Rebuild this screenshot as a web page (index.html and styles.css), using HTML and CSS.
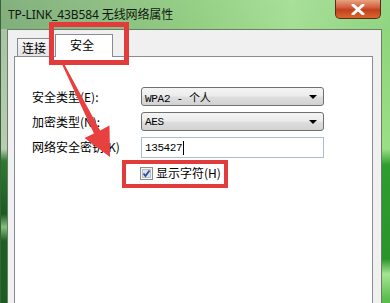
FILE: index.html
```html
<!DOCTYPE html>
<html lang="zh-CN">
<head>
<meta charset="utf-8">
<title>TP-LINK_43B584 无线网络属性</title>
<link rel="stylesheet" href="styles.css">
</head>
<body>
<div class="window">
  <div class="titlebar">
    <span class="title">TP-LINK_43B584 无线网络属性</span>
    <div class="close">
      <svg width="14" height="11" viewBox="0 0 14 11"><path d="M2 1 L12 10 M12 1 L2 10" stroke="#fff" stroke-width="3" stroke-linecap="round"/></svg>
    </div>
  </div>
  <div class="client">
    <div class="tabs">
      <div class="tab">连接</div>
      <div class="tab active">安全</div>
    </div>
    <div class="panel">
      <div class="form">
        <label class="lbl">安全类型(E):</label>
        <div class="select"><span>WPA2 - 个人</span><i class="caret"></i></div>
        <label class="lbl">加密类型(N):</label>
        <div class="select"><span>AES</span><i class="caret"></i></div>
        <label class="lbl">网络安全密钥(K)</label>
        <div class="input">135427<span class="cursor"></span></div>
      </div>
      <div class="check-row">
        <span class="checkbox">
          <svg width="13" height="13" viewBox="0 0 13 13"><rect x="0.5" y="0.5" width="12" height="12" fill="#f4f4f4" stroke="#8e8f8f"/><rect x="2.5" y="2.5" width="8" height="8" fill="#dfe3e8" stroke="#b9c0c8"/><path d="M3.5 6.5 L5.5 9 L9.5 3.5" fill="none" stroke="#2b4f9a" stroke-width="1.8"/></svg>
        </span>
        <span class="check-label">显示字符(H)</span>
      </div>
    </div>
  </div>
  <div class="mark mark-tab"></div>
  <div class="mark mark-check"></div>
  <svg class="arrow" width="390" height="303" viewBox="0 0 390 303"><polygon points="62.1,64.5 63.9,63.5 100.1,130.4 109.5,125.6 110,157 84.5,138 93.9,133.6" fill="#e8403f"/></svg>
</div>
</body>
</html>
```
FILE: styles.css
```css
html, body {
  margin: 0;
  padding: 0;
}
body {
  width: 390px;
  height: 303px;
  overflow: hidden;
  font-family: "Noto Sans", "Noto Sans CJK SC", sans-serif;
  font-size: 12px;
  color: #000;
}
.window {
  position: relative;
  width: 390px;
  height: 303px;
  display: flex;
  flex-direction: column;
  background:
    linear-gradient(to bottom, #a9c3a4 0, #b7cdb2 120px, #2d7a31 132px, #1c5c20 185px, #86c07e 198px, #1d5f22 212px, #1a5a1e 100%) left 0 top 29px / 7px 100% no-repeat,
    linear-gradient(to bottom, #8fd57c 0, #9ade86 120px, #2f9c2f 136px, #2a942a 230px, #a6e494 245px, #5bbd4e 270px, #4aad42 100%) right 0 top 29px / 8px 100% no-repeat,
    linear-gradient(to bottom, rgba(255,255,255,0.18), rgba(255,255,255,0) 60%),
    linear-gradient(to right, #6aa064 0, #76b06a 25%, #7fc66c 50%, #95d883 75%, #7ccd6a 100%);
  box-shadow: inset 1px 0 0 #3d5f3a;
}
.titlebar {
  height: 29px;
  display: flex;
  align-items: flex-start;
  padding-left: 8px;
  flex: none;
}
.title {
  margin-top: 6px;
  line-height: 17px;
  color: #101810;
  letter-spacing: -0.1px;
}
.close {
  margin-left: auto;
  margin-right: 9px;
  width: 46px;
  height: 19px;
  box-sizing: border-box;
  border: 1px solid #5a2a1a;
  border-top: none;
  border-radius: 0 0 5px 5px;
  background: linear-gradient(to bottom, #e8a283 0, #d4613c 40%, #c2401f 55%, #d8682e 100%);
  display: flex;
  align-items: center;
  justify-content: center;
}
.client {
  flex: 1;
  margin: 0 8px 0 7px;
  background: #f0f0f0;
  border: 1px solid #6d7d69;
  border-bottom: none;
  display: flex;
  flex-direction: column;
}
.tabs {
  height: 26px;
  display: flex;
  align-items: flex-end;
  padding-left: 9px;
  flex: none;
  position: relative;
  z-index: 1;
}
.tab {
  height: 18px;
  width: 33px;
  box-sizing: border-box;
  border: 1px solid #898c95;
  border-bottom: none;
  background: linear-gradient(to bottom, #f6f6f6, #e4e4e4);
  font-family: "Noto Sans CJK SC", sans-serif;
  font-size: 12px;
  line-height: 17px;
  padding-left: 4px;
  margin-bottom: 0;
}
.tab.active {
  width: 58px;
  height: 23px;
  margin-left: 5px;
  margin-bottom: -1px;
  background: #fff;
  padding-left: 14px;
  line-height: 20px;
}
.panel {
  flex: 1;
  margin: 0 8px 0 6px;
  background: #fff;
  border: 1px solid #898c95;
  border-bottom: none;
}
.form {
  display: grid;
  grid-template-columns: 109px 183px;
  grid-auto-rows: 19px;
  row-gap: 6px;
  padding: 30px 0 0 17px;
  align-items: center;
}
.lbl {
  font-family: "Noto Sans CJK SC", sans-serif;
  font-size: 12px;
  line-height: 19px;
  white-space: nowrap;
}
.select {
  height: 19px;
  box-sizing: border-box;
  border: 1px solid #707070;
  border-radius: 3px;
  background: linear-gradient(to bottom, #f4f4f4 0, #ececec 45%, #dddddd 55%, #d2d2d2 100%);
  display: flex;
  align-items: center;
  padding: 0 6px 0 3px;
  font-family: "Liberation Mono", "Noto Sans CJK SC", monospace;
  font-size: 11px;
}
.select span {
  flex: 1;
  letter-spacing: -0.3px;
}
.caret {
  width: 0;
  height: 0;
  border-left: 4px solid transparent;
  border-right: 4px solid transparent;
  border-top: 4px solid #000;
}
.input {
  height: 21px;
  box-sizing: border-box;
  border: 1px solid #abbdd0;
  background: #fff;
  display: flex;
  align-items: center;
  padding-left: 3px;
  font-family: "Liberation Mono", monospace;
  font-size: 11px;
  letter-spacing: -0.4px;
  margin-top: 2px;
}
.cursor {
  display: inline-block;
  width: 1px;
  height: 14px;
  background: #000;
  margin-left: 1px;
}
.check-row {
  display: flex;
  align-items: center;
  padding-left: 125px;
  margin-top: 10px;
  height: 14px;
}
.checkbox {
  display: flex;
  width: 13px;
  height: 13px;
}
.check-label {
  margin-left: 3px;
  font-family: "Noto Sans CJK SC", sans-serif;
  font-size: 12px;
  line-height: 14px;
}
.mark {
  position: absolute;
  box-sizing: border-box;
  border-style: solid;
  border-color: #e23b3b;
  z-index: 3;
}
.mark-tab {
  left: 49px;
  top: 22px;
  width: 80px;
  height: 43px;
  border-width: 5px;
}
.mark-check {
  left: 122px;
  top: 160px;
  width: 106px;
  height: 28px;
  border-width: 4px;
}
.arrow {
  position: absolute;
  left: 0;
  top: 0;
  z-index: 3;
  pointer-events: none;
}
```
